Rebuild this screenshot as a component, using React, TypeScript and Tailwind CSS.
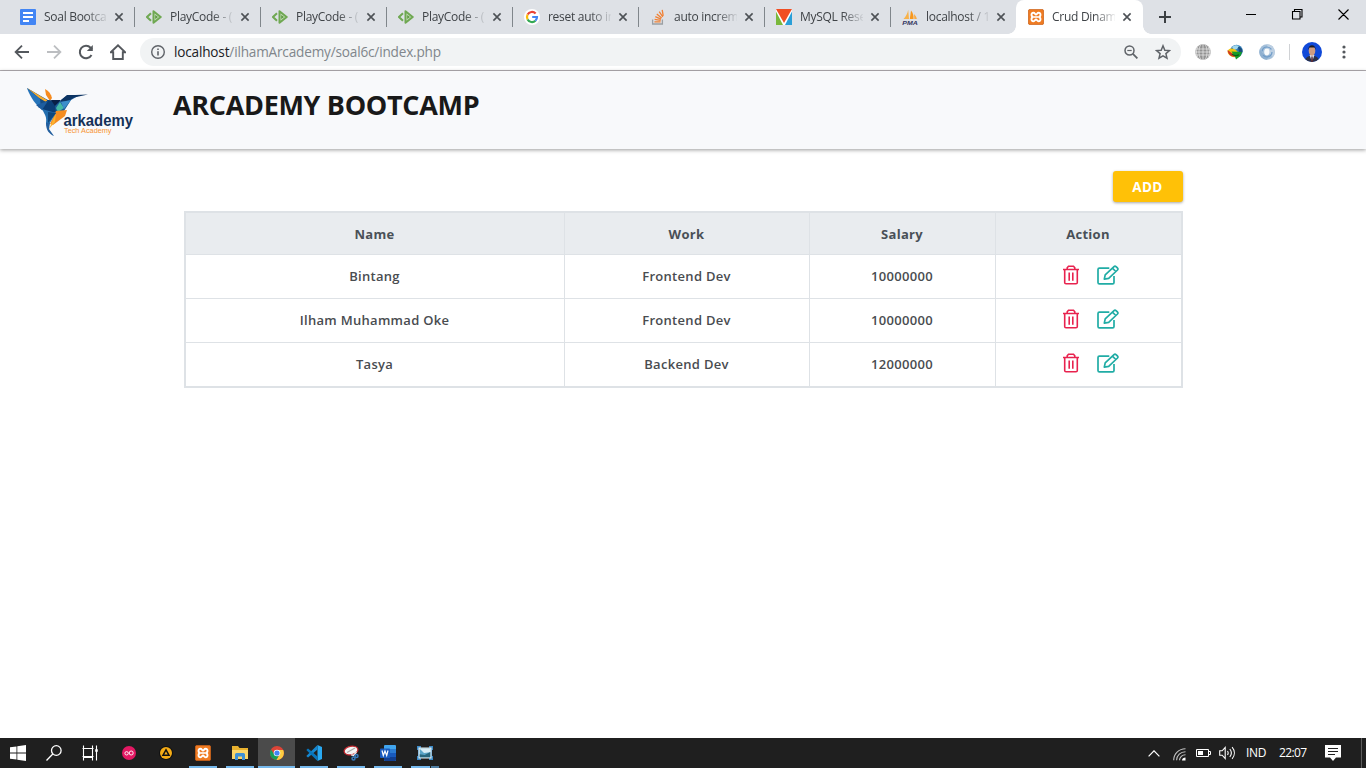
import React from 'react';

type IconProps = { className?: string };

const DocsIcon = () => (
  <svg viewBox="0 0 16 16" className="size-4">
    <rect width="16" height="16" rx="1" fill="#4285f4" />
    <path d="M3 4h10M3 8h10M3 12h6" stroke="#fff" strokeWidth="2" />
  </svg>
);

const PlayCodeIcon = () => (
  <svg viewBox="0 0 16 16" className="size-4">
    <path d="M5 4.2 1 8l4 3.8" fill="none" stroke="#6fa852" strokeWidth="2" />
    <path d="M7.5 2.2v11.6L14.7 8z" fill="#c6dcba" stroke="#6fa852" strokeWidth="2" strokeLinejoin="round" />
    <path d="M9.2 6v4l2.8-2z" fill="#5d9a42" />
  </svg>
);

const GoogleIcon = () => (
  <svg viewBox="0 0 16 16" className="size-4">
    <circle cx="8" cy="8" r="8" fill="#fff" />
    <g fill="none" strokeWidth="2.2">
      <path d="M11.6 4.5A5 5 0 0 0 3.6 5.6" stroke="#ea4335" />
      <path d="M3.6 5.6a5 5 0 0 0 0 4.8" stroke="#fbbc05" />
      <path d="M3.6 10.4a5 5 0 0 0 7.8 1.3" stroke="#34a853" />
      <path d="M11.4 11.7A5 5 0 0 0 13 8H8.2" stroke="#4285f4" />
    </g>
  </svg>
);

const StackIcon = () => (
  <svg viewBox="0 0 16 16" className="size-4" fill="none">
    <path d="M2.6 10.5V15h9.8v-4.5" stroke="#9b9fa3" strokeWidth="1.3" />
    <path d="M4.4 12.8h6.2M4.6 10.3l6.1 1.1M5.3 7.6l5.7 2.6M6.8 4.9l4.8 4.1M9.2 2.6l3.6 5.2M12.2.8l1 6" stroke="#f08135" strokeWidth="1.3" />
  </svg>
);

const VIcon = () => (
  <svg viewBox="0 0 16 16" className="size-4">
    <rect width="16" height="16" fill="#fff" />
    <path d="M0 0h16L8 14z" fill="#f04e23" />
    <path d="M0 2.5V16h7z" fill="#7ab83c" />
    <path d="M16 2.5V16H9z" fill="#2a9fd8" />
  </svg>
);

const PmaIcon = () => (
  <svg viewBox="0 0 16 16" className="size-4">
    <path d="M6.2.8 7 10H1.5C4 7.5 5.5 4.5 6.2.8z" fill="#f8b24a" />
    <path d="M9 1.6c2 2.2 2.7 5 2.5 8.4H7.8z" fill="#f8981d" />
    <path d="M12 5c1.5 1.5 2.4 3 2.8 5h-2.5z" fill="#f9a940" />
    <text x="8" y="15.7" textAnchor="middle" textLength="15.5" lengthAdjust="spacingAndGlyphs" fontFamily="Liberation Sans" fontSize="6" fontWeight="bold" fontStyle="italic" fill="#34365f">PMA</text>
  </svg>
);

const XamppIcon = ({ className = 'size-4' }: IconProps) => (
  <svg viewBox="0 0 16 16" className={className}>
    <rect x=".4" y=".4" width="15.2" height="15.2" rx="1.6" fill="#ef7b22" stroke="#cd631b" strokeWidth=".8" />
    <path d="M5.8 8C2.8 8 2.8 3.7 5.4 3.7c1.6 0 1.5 1.8 2.6 1.8s1-1.8 2.6-1.8c2.6 0 2.6 4.3-.4 4.3 3 0 3 4.3.4 4.3-1.6 0-1.5-1.8-2.6-1.8s-1 1.8-2.6 1.8C2.8 12.3 2.8 8 5.8 8z" fill="none" stroke="#fff" strokeWidth="1.9" />
    <path d="M6 8h4" stroke="#fff" strokeWidth="1.6" />
  </svg>
);

const CloseX = () => (
  <svg viewBox="0 0 8 8" className="size-2 overflow-visible">
    <path d="M.4.4l7.2 7.2M7.6.4L.4 7.6" stroke="#4d5156" strokeWidth="1.6" />
  </svg>
);

const tabs: { title: string; icon: React.ReactNode }[] = [
  { title: 'Soal Bootca', icon: <DocsIcon /> },
  { title: 'PlayCode - (', icon: <PlayCodeIcon /> },
  { title: 'PlayCode - (', icon: <PlayCodeIcon /> },
  { title: 'PlayCode - (', icon: <PlayCodeIcon /> },
  { title: 'reset auto in', icon: <GoogleIcon /> },
  { title: 'auto increm', icon: <StackIcon /> },
  { title: 'MySQL Rese', icon: <VIcon /> },
  { title: 'localhost / 1', icon: <PmaIcon /> },
];

function Tab({ title, icon, active, divider }: { title: string; icon: React.ReactNode; active?: boolean; divider?: boolean }) {
  return (
    <div
      className={
        active
          ? 'relative flex h-[34px] w-[127px] items-center rounded-t-lg bg-white pl-3'
          : 'relative flex h-[34px] w-[126px] items-center pl-3'
      }
    >
      {divider && <span className="absolute left-0 top-[7px] h-5 w-px bg-[#80868b]" />}
      {active && (
        <>
          <span className="absolute -left-2 bottom-0 size-2 bg-[radial-gradient(circle_at_0_0,transparent_7.5px,#fff_8px)]" />
          <span className="absolute -right-2 bottom-0 size-2 bg-[radial-gradient(circle_at_100%_0,transparent_7.5px,#fff_8px)]" />
        </>
      )}
      {icon}
      <span className="ml-2 w-[63px] whitespace-nowrap text-[12px] leading-[18px] tracking-[-0.28px] text-[#3f4347] [mask-image:linear-gradient(to_right,#000_42px,transparent_65px)]">
        {title}
      </span>
      <span className="ml-2 flex">
        <CloseX />
      </span>
    </div>
  );
}

function TabStrip() {
  return (
    <div className="flex h-[34px] bg-[#dee1e6] pl-2">
      {tabs.map((t, i) => (
        <Tab key={i} title={t.title} icon={t.icon} divider={i > 0} />
      ))}
      <Tab title="Crud Dinam" icon={<XamppIcon />} active />
      <svg viewBox="0 0 12 12" className="ml-4 mt-[11px] size-3">
        <path d="M6 0v12M0 6h12" stroke="#3c4043" strokeWidth="2" />
      </svg>
      <div className="ml-auto flex pr-[17px] pt-[9px]">
        <svg viewBox="0 0 104 12" className="h-3 w-[104px]" fill="none" stroke="#000">
          <path d="M1 5.5h10M47.5 2.500h7.500v7.500h-7.500zM49.5 2.500v-2H57v7.500h-2M93.500.5l10 10M103.500.5l-10 10" strokeWidth="1.1" />
        </svg>
      </div>
    </div>
  );
}

function Toolbar() {
  return (
    <div className="flex h-[37px] items-center border-b border-[#b4b0b4] bg-white pl-[14px]">
      <svg viewBox="0 0 16 16" className="size-4" fill="none" stroke="#54585d" strokeWidth="1.8">
        <path d="M15 8H2M8 1.6 1.6 8 8 14.4" />
      </svg>
      <svg viewBox="0 0 16 16" className="ml-4 size-4" fill="none" stroke="#bcbec1" strokeWidth="1.8">
        <path d="M1 8h13M8 1.6 14.4 8 8 14.4" />
      </svg>
      <svg viewBox="0 0 16 16" className="ml-4 size-4" fill="none" stroke="#54585d" strokeWidth="2">
        <path d="M13.5 11A6.2 6.2 0 1 1 12.6 3.8L14 5.3" />
        <path d="M14.8 1v6h-6z" fill="#54585d" stroke="none" />
      </svg>
      <svg viewBox="0 0 16 16" className="ml-4 size-4" fill="none" stroke="#54585d" strokeWidth="1.9">
        <path d="M.8 8.2 8 1.3l7.2 6.9H12.8V15H3.2V8.2z" />
      </svg>
      <div className="ml-[14px] flex h-7 w-[1041px] items-center rounded-full bg-[#f1f3f4] pl-[11px] pr-[10px]">
        <svg viewBox="0 0 14 14" className="size-[14px]" fill="none" stroke="#5f6368">
          <circle cx="7" cy="7" r="6.3" strokeWidth="1.4" />
          <path d="M7 6.2v4.3M7 3.4v1.5" strokeWidth="1.6" />
        </svg>
        <span className="ml-[9px] whitespace-nowrap text-[13.6px] tracking-[-0.18px] text-[#80868b]">
          <span className="text-[#202124]">localhost</span>/ilhamArcademy/soal6c/index.php
        </span>
        <svg viewBox="0 0 14 14" className="ml-auto size-[14px]" fill="none" stroke="#5f6368">
          <circle cx="5.5" cy="5.5" r="4.5" strokeWidth="1.5" />
          <path d="M3.3 5.5h4.4" strokeWidth="1.2" />
          <path d="m8.9 8.9 4.5 4.5" strokeWidth="1.8" />
        </svg>
        <svg viewBox="0 0 16 16" className="ml-[17px] size-4" fill="none" stroke="#5f6368" strokeWidth="1.5">
          <path d="m8 1.8 1.8 4.4 4.7.4-3.6 3 1.1 4.6L8 11.8l-4 2.4 1.1-4.6-3.6-3 4.7-.4z" />
        </svg>
      </div>
      <svg viewBox="0 0 16 16" className="ml-[14px] size-4">
        <circle cx="8" cy="8" r="7.7" fill="#929292" />
        <path d="M0 5h16M0 8h16M0 11h16M8 0v16M3 2.5c-2 3-2 8 0 11M13 2.5c2 3 2 8 0 11M5.5 1c-2 4-2 10 0 14M10.5 1c2 4 2 10 0 14" fill="none" stroke="#eee" strokeWidth=".7" />
      </svg>
      <svg viewBox="0 0 16 16" className="ml-4 size-4">
        <circle cx="9.5" cy="7" r="6.2" fill="#2e79b5" />
        <path d="M5 3c2-2 5-2.4 7-1.2L10 5 7 6z" fill="#a3d9ee" />
        <path d="M11 3c3 0 4.5 2 4.5 5l-3 2z" fill="#1d4d7a" />
        <ellipse cx="6" cy="8.8" rx="5.6" ry="4" fill="#f1c40f" transform="rotate(25 6 8.8)" />
        <path d="M.5 6C1 11 5 13.5 9 12.5L6 10z" fill="#cf3327" />
        <path d="M4.5 7.5 15 8l-1.5 4L9 15.5 8 12.5z" fill="#169b27" />
        <path d="M5 9.8c2 2 5 2 7 1" stroke="#075f12" strokeWidth="1.2" fill="none" />
      </svg>
      <svg viewBox="0 0 16 16" className="ml-4 size-4">
        <circle cx="8" cy="8" r="7.8" fill="#a3bfd9" />
        <path d="M8 .2A7.8 7.8 0 0 1 14 13L9 8z" fill="#bccfe2" />
        <path d="M8 15.8A7.8 7.8 0 0 1 1 5c2 4 4 6 9 6z" fill="#8fb0d0" />
        <circle cx="8" cy="8" r="5" fill="none" stroke="#6f9cc9" strokeWidth="1.2" strokeDasharray="12 4" />
        <ellipse cx="7.8" cy="8" rx="2.6" ry="3.4" fill="#f8fafb" />
      </svg>
      <span className="ml-[14px] h-4 w-px bg-[#d0d2d5]" />
      <svg viewBox="0 0 20 20" className="ml-3 size-5">
        <defs>
          <clipPath id="avatar"><circle cx="10" cy="10" r="10" /></clipPath>
        </defs>
        <g clipPath="url(#avatar)">
          <rect width="20" height="20" fill="#1049d8" />
          <path d="M3 20c0-4 2-6 7-6.500 5 .5 7 2.500 7 6.500z" fill="#2b3148" />
          <path d="m7.500 13 2.500 7 2.500-7z" fill="#d9dde8" />
          <path d="M9.400 14.500h1.200l.5 5.500H9z" fill="#5a2b35" />
          <ellipse cx="10" cy="8.800" rx="3.300" ry="5" fill="#cf9c80" />
          <path d="M6.300 8C6 1.500 14 1.500 13.700 8l-1-2.500H7.300z" fill="#161923" />
        </g>
      </svg>
      <svg viewBox="0 0 4 14" className="ml-[20px] h-[14px] w-1" fill="#54585d">
        <circle cx="2" cy="2" r="1.600" /><circle cx="2" cy="7" r="1.600" /><circle cx="2" cy="12" r="1.600" />
      </svg>
    </div>
  );
}

function Logo() {
  return (
    <svg viewBox="0 0 120 60" className="h-[60px] w-[120px]">
      <path d="M7 8 26 19l6 3 2 12-12-4-8-11z" fill="#154b83" />
      <path d="M7 8 27 20l1 3-9-5z" fill="#f9ad2c" />
      <path d="M7 8l13 11 1 9c-5-3-10-9-14-20z" fill="#2674b9" />
      <path d="M25 9c4 2 6 5 7 9l-2 3-4-6z" fill="#f68b1f" />
      <path d="M18 27l10-7 12 1-4 12-8-1z" fill="#0b3d75" />
      <path d="M16 25l12-4-6 9z" fill="#1e5d9e" />
      <path d="M31 20h10l-6 6z" fill="#091f47" />
      <path d="M41 20l7-5h7l3 1-7 4-7 11-8 2-1-7z" fill="#1d5a97" />
      <path d="M41 20l6-5h8l13-.5-14 3-5 3-8 1z" fill="#0d3463" />
      <path d="M40 22l4 6-6 4-2-4z" fill="#45b9a5" />
      <path d="M51 20l-7 9-3-7z" fill="#3c8ecb" />
      <path d="M36 31l11-1-2 6-12 9-3-1z" fill="#f58c20" />
      <path d="M36 33l-1 9-6 7z" fill="#fbb32f" />
      <path d="M22 29l14 4-8 13v4l-2-7c1-6-1-8-4-14z" fill="#236eae" />
      <path d="M28 32l8 1-8 10z" fill="#0f477c" />
      <path d="M26 43l4 0-1 6 5 7c-5-2-8-6-8-13z" fill="#235f9e" />
      <text x="43.500" y="45.500" textLength="69.500" lengthAdjust="spacingAndGlyphs" fontFamily="Liberation Sans" fontSize="16" fontWeight="bold" fill="#143158">arkademy</text>
      <text x="44" y="53" textLength="47.500" lengthAdjust="spacingAndGlyphs" fontFamily="Liberation Sans" fontSize="7.300" fill="#f79433">Tech Academy</text>
    </svg>
  );
}

const TrashIcon = () => (
  <svg viewBox="0 0 18 20" className="h-5 w-[18px]" fill="none" stroke="#e8224e" strokeWidth="1.600">
    <path d="M1 4.500h16M5.200 4.500V2.700L6.500 1.200h5l1.300 1.500v1.800M2.700 4.500v13q0 1.300 1.300 1.300h10q1.300 0 1.300-1.300v-13" />
    <path d="M7.200 7.500v8.300M10.800 7.500v8.300" />
  </svg>
);

const EditIcon = () => (
  <svg viewBox="0 0 22 20" className="h-5 w-[22px]" fill="none" stroke="#20aca5" strokeWidth="1.700" strokeLinejoin="round">
    <path d="M12.300 3.200H2.400Q1 3.200 1 4.600v12.800q0 1.400 1.400 1.400h13.200q1.400 0 1.400-1.400V11" />
    <path d="m7.300 14.200.9-4.300 8.800-8.200q1-.9 2 0l1.500 1.300q.9 1 0 2l-8.800 8.300zM15.400 3.100l3.400 3.400" />
  </svg>
);

const rows = [
  ['Bintang', 'Frontend Dev', '10000000'],
  ['Ilham Muhammad Oke', 'Frontend Dev', '10000000'],
  ['Tasya', 'Backend Dev', '12000000'],
];

const cell = 'border-r border-b border-[#dee2e6] p-0 text-center align-middle';

function EmployeeTable() {
  return (
    <div className="mt-[9px] border-2 border-[#dee2e6]">
      <table className="w-[995px] table-fixed border-separate border-spacing-0 text-[13px] leading-5 tracking-[0.300px] text-[#494c50]">
        <colgroup>
          <col className="w-[379px]" /><col className="w-[245px]" /><col className="w-[186px]" /><col className="w-[185px]" />
        </colgroup>
        <thead>
          <tr className="h-[42px] bg-[#e9ecef] text-[#495057]">
            {['Name', 'Work', 'Salary', 'Action'].map((h) => (
              <th key={h} className={`${cell} font-bold last:border-r-0`}>{h}</th>
            ))}
          </tr>
        </thead>
        <tbody>
          {rows.map((r) => (
            <tr key={r[0]} className="group h-11 last:h-[43px]">
              {r.map((v, i) => (
                <td key={i} className={`${cell} pb-[2px] font-semibold group-last:border-b-0`}>{v}</td>
              ))}
              <td className={`${cell} border-r-0 group-last:border-b-0`}>
                <div className="flex justify-center gap-[17px] pb-1 pl-[5px]">
                  <TrashIcon />
                  <EditIcon />
                </div>
              </td>
            </tr>
          ))}
        </tbody>
      </table>
    </div>
  );
}

function TaskSlot({ children, running, active }: { children: React.ReactNode; running?: boolean; active?: boolean }) {
  return (
    <div className={active ? 'flex h-[30px] w-[37px] flex-col items-center bg-[#4b4b4b]' : 'flex h-[30px] w-[37px] flex-col items-center'}>
      <div className="flex h-7 items-center pt-[2px]">{children}</div>
      {running && <span className={active ? 'h-[2px] w-full bg-[#76b9ed]' : 'h-[2px] w-7 bg-[#76b9ed]'} />}
    </div>
  );
}

function Taskbar() {
  return (
    <div className="flex h-[30px] items-center bg-[#1f1f1f] text-white">
      <svg viewBox="0 0 16 16" className="ml-[10px] size-4" fill="#fff">
        <path d="M0 2.300 6.500 1.400v6.200H0zM7.300 1.300 16 0v7.600H7.300zM0 8.400h6.500v6.200L0 13.700zM7.300 8.400H16V16l-8.700-1.300z" />
      </svg>
      <svg viewBox="0 0 16 16" className="ml-5 size-4" fill="none" stroke="#fff" strokeWidth="1.300">
        <circle cx="10.300" cy="5.500" r="4.800" /><path d="M6.800 9 .5 15.500" />
      </svg>
      <svg viewBox="0 0 16 16" className="ml-5 size-4" fill="none" stroke="#fff" strokeWidth="1.100">
        <path d="M1.500.5v3h9v-3M.5 3.500h11M.5 11.500h11M1.500 3.500v8M10.500 3.500v8M1.500 15.500v-3h9v3M14.500.5v15" /><path d="M13.200 5.500h2.600" strokeWidth="2.500" />
      </svg>
      <div className="ml-[12px] flex">
        <TaskSlot>
          <svg viewBox="0 0 14 14" className="size-[14px]">
            <circle cx="7" cy="7" r="7" fill="#e31863" />
            <g fill="none" stroke="#fff" strokeWidth=".9"><circle cx="4.600" cy="7.300" r="1.700" /><circle cx="9.200" cy="7" r="2" /></g>
          </svg>
        </TaskSlot>
        <TaskSlot>
          <svg viewBox="0 0 14 14" className="size-[14px]">
            <circle cx="7" cy="7" r="7" fill="#111" /><circle cx="7" cy="7" r="6" fill="#f5ac16" />
            <path d="m7 3.800-3 5.400h6z" fill="none" stroke="#111" strokeWidth="1.500" />
          </svg>
        </TaskSlot>
        <TaskSlot running><XamppIcon /></TaskSlot>
        <TaskSlot running>
          <svg viewBox="0 0 16 16" className="size-4">
            <path d="M0 1h6l1.500 2H16v11H0z" fill="#e9b22f" /><path d="M0 5h16v9H0z" fill="#fbd668" />
            <path d="M3 15V9.500q0-1.500 1.500-1.500h7q1.500 0 1.500 1.500V15h-3v-3.500H6V15z" fill="#3e91d5" />
          </svg>
        </TaskSlot>
        <TaskSlot running active>
          <svg viewBox="0 0 14 14" className="size-[14px]">
            <circle cx="7" cy="7" r="7" fill="#dc4437" />
            <path d="M1 3.400A7 7 0 0 0 6.500 14L9.500 8.500 4.300 8.500z" fill="#169d58" />
            <path d="M13.200 4H7l2.700 4.500L6.500 14A7 7 0 0 0 13.200 4z" fill="#fdcd40" />
            <circle cx="7" cy="7" r="3.300" fill="#fff" /><circle cx="7" cy="7" r="2.600" fill="#4285f4" />
          </svg>
        </TaskSlot>
        <TaskSlot running>
          <svg viewBox="0 0 16 16" className="size-4">
            <path d="M11.500 0 16 2v12l-4.500 2z" fill="#29a9f2" />
            <path d="M11.500 0v4.500L2 12.500.3 11z" fill="#1687d0" /><path d="M11.500 16v-4.500L2 3.500.3 5z" fill="#0876bd" />
          </svg>
        </TaskSlot>
        <TaskSlot running>
          <svg viewBox="0 0 16 16" className="size-4">
            <ellipse cx="8" cy="5.500" rx="7" ry="4.300" fill="#f5f5f5" stroke="#c3272e" strokeWidth="1.300" transform="rotate(-12 8 5.500)" />
            <path d="M4 7.500 12 3" stroke="#aaa" strokeWidth="1.200" />
            <path d="M9 7v4M13.500 7 10 11" stroke="#eee" strokeWidth="1.200" />
            <g fill="none" stroke="#3678ba" strokeWidth="1.500"><circle cx="10.500" cy="13.500" r="1.500" /><circle cx="13.500" cy="11" r="1.500" /></g>
          </svg>
        </TaskSlot>
        <TaskSlot running>
          <svg viewBox="0 0 16 16" className="size-4">
            <rect x="4" width="12" height="16" rx="1" fill="#41a5ee" /><path d="M4 4h12v4H4z" fill="#2b7cd3" />
            <path d="M4 8h12v4H4z" fill="#185abd" /><path d="M4 12h12v3q0 1-1 1H5q-1 0-1-1z" fill="#103f91" />
            <rect y="3.500" width="10" height="9.500" rx=".8" fill="#185abd" />
            <path d="m2 5.500 1.300 5L5 6l1.700 4.500L8 5.500" fill="none" stroke="#fff" strokeWidth="1.200" />
          </svg>
        </TaskSlot>
        <div className="flex h-[30px] w-[37px] flex-col items-center">
          <div className="flex h-7 items-center pt-[2px]">
            <svg viewBox="0 0 16 16" className="size-4">
              <path d="M0 1h4v3H2v8h2v3H0v-4h1V5H0zM16 1h-4v3h2v8h-2v3h4v-4h-1V5h1z" fill="#3d8ac6" />
              <rect x="1.500" y="2.500" width="13" height="11" fill="#e6edf0" /><rect x="2.700" y="3.700" width="10.600" height="8.600" fill="#5aa5c8" />
              <path d="M2.700 3.700h10.600v3.500L7 8z" fill="#d8edf6" /><path d="m2.700 12.300v-3l5 .7 5.600-3v5.300z" fill="#28677e" />
            </svg>
          </div>
          <span className="flex h-[2px] w-7">
            <span className="w-[19px] bg-[#76b9ed]" />
            <span className="ml-px w-2 bg-[#4f7ea3]" />
          </span>
        </div>
      </div>
      <div className="ml-auto flex h-full items-center">
        <svg viewBox="0 0 12 7" className="h-[7px] w-3" fill="none" stroke="#fff" strokeWidth="1.200"><path d="m.6 6.300 5.400-5.500 5.400 5.500" /></svg>
        <svg viewBox="0 0 13 13" className="ml-[13px] mt-[2px] size-[13px]" fill="none" stroke="#c4c4c4" strokeWidth="1.100">
          <path d="M.7 12.300C.7 5.800 5.800.7 12.500.7M3.600 12.300c0-4.800 4.100-8.600 8.900-8.600M6.500 12.300c0-3.200 2.800-5.600 6-5.600" />
          <path d="M9 12.500c0-2 1.500-3 3.500-3v3z" fill="#fff" stroke="none" />
        </svg>
        <svg viewBox="0 0 15 10" className="ml-[10px] h-[10px] w-[15px]" fill="none" stroke="#fff">
          <path d="M.5 1.500h12v7H.5zM12.500 3.500h2v3h-2" /><path d="M2 3h5v4H2z" fill="#fff" stroke="none" />
        </svg>
        <svg viewBox="0 0 17 14" className="ml-2 h-[14px] w-[17px]" fill="none" stroke="#fff" strokeWidth="1.100">
          <path d="M.7 4.800h2.500l3-3.300v11l-3-3.300H.7zM8.500 5c.8 1.200.8 2.800 0 4M10.800 3c1.900 2.400 1.900 5.600 0 8M13.100 1.200c3 3.500 3 8.100 0 11.600" />
        </svg>
        <span className="ml-[10px] w-[33px] whitespace-nowrap text-[12px] tracking-[-0.300px]">IND</span>
        <span className="w-[46px] whitespace-nowrap text-[12px] tracking-[-0.650px]">22:07</span>
        <svg viewBox="0 0 16 16" className="size-4">
          <path d="M0 0h16v12.500h-5L8 16l-3-3.500H0z" fill="#fff" /><path d="M3 3.500h10M3 6.500h10M3 9.500h7" stroke="#222" strokeWidth="1" />
        </svg>
        <span className="ml-5 mr-1 h-full w-px bg-[#5c5c5c]" />
      </div>
    </div>
  );
}

export default function App() {
  return (
    <div className="flex h-[768px] w-[1366px] flex-col overflow-hidden bg-white font-['Open_Sans','Noto_Sans',sans-serif]">
      <TabStrip />
      <Toolbar />
      <header className="flex h-[78px] shrink-0 bg-[#f8f9fb] pl-5 pt-[9px] shadow-[0_1px_4px_rgba(0,0,0,0.4)]">
        <Logo />
        <h1 className="ml-[33px] mt-[7px] whitespace-nowrap text-[27px] leading-9 font-bold tracking-[-0.320px] text-[#191919]">ARCADEMY BOOTCAMP</h1>
      </header>
      <main className="mx-auto flex w-[999px] flex-1 flex-col pt-[22px]">
        <button className="h-[31px] w-[70px] self-end rounded-[3px] bg-[#ffc107] pt-px text-[13.500px] font-bold tracking-[0.400px] text-white shadow-[0_1px_3px_rgba(0,0,0,0.35)]">ADD</button>
        <EmployeeTable />
      </main>
      <Taskbar />
    </div>
  );
}
